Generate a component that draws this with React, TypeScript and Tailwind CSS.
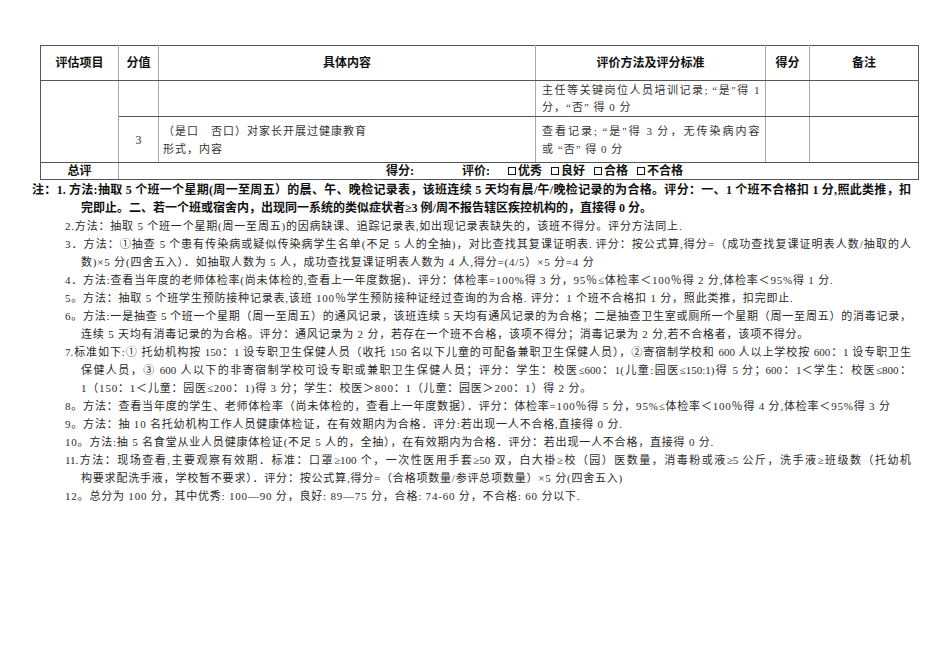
import React from "react";

const base = "p-0 border border-solid border-t-[#555] border-b-[#555] align-middle";
const inner = base + " border-l-[#aaa] border-r-[#aaa]";
const first = base + " border-l-[#555] border-r-[#aaa]";
const last = base + " border-l-[#aaa] border-r-[#555]";
const head = "text-center font-bold text-[12px] text-[#111] leading-[16px]";

type NoteProps = {
  children: React.ReactNode;
  indent: string;
  justify?: boolean;
  bold?: boolean;
};

function Note({ children, indent, justify = false, bold = false }: NoteProps) {
  const weight = bold
    ? "font-bold text-[12px] text-[#111] tracking-normal"
    : "text-[11px] text-[#2a2a2a]";
  const align = justify
    ? "text-justify [text-align-last:justify] tracking-normal"
    : "whitespace-nowrap tracking-[0.8px]";
  return (
    <div className={`h-[18px] leading-[18px] ${indent} ${weight} ${bold ? "" : align} ${bold && justify ? "text-justify [text-align-last:justify]" : ""} ${bold && !justify ? "whitespace-nowrap" : ""}`}>
      {children}
    </div>
  );
}

function Box({ label }: { label: string }) {
  return (
    <span className="flex items-center">
      <span className="inline-block w-[8px] h-[8px] border border-[#111] mr-[2px]"></span>
      <span>{label}</span>
    </span>
  );
}

export default function App() {
  return (
    <div className="w-[950px] h-[672px] bg-white overflow-hidden [font-family:'Liberation_Serif','Noto_Sans_CJK_SC',serif] text-[#333]">
      <div className="pt-[45px] pl-[40px]">
        <table className="border-collapse table-fixed w-[878px]">
          <colgroup>
            <col className="w-[78px]" />
            <col className="w-[40px]" />
            <col className="w-[377px]" />
            <col className="w-[230px]" />
            <col className="w-[44px]" />
            <col className="w-[109px]" />
          </colgroup>
          <tbody>
            <tr className="h-[35px]">
              <td className={first + " " + head}>评估项目</td>
              <td className={inner + " " + head}>分值</td>
              <td className={inner + " " + head}>具体内容</td>
              <td className={inner + " " + head}>评价方法及评分标准</td>
              <td className={inner + " " + head}>得分</td>
              <td className={last + " " + head}>备注</td>
            </tr>
            <tr className="h-[36px]">
              <td className={first} rowSpan={2}></td>
              <td className={inner}></td>
              <td className={inner}></td>
              <td className={inner}>
                <div className="pl-[6px] pr-[5px] text-[11px] leading-[17px] text-[#333]">
                  <div className="text-justify [text-align-last:justify] tracking-[0.5px]">主任等关键岗位人员培训记录;  “是"得 1</div>
                  <div className="tracking-[1px] whitespace-nowrap">分，“否” 得 0 分</div>
                </div>
              </td>
              <td className={inner}></td>
              <td className={last}></td>
            </tr>
            <tr className="h-[46px]">
              <td className={inner + " text-center text-[12px] text-[#333]"}>3</td>
              <td className={inner}>
                <div className="pl-[4px] text-[11px] leading-[18px] text-[#333] tracking-[1px]">
                  <div className="whitespace-nowrap">（是口　否口）对家长开展过健康教育</div>
                  <div className="whitespace-nowrap">形式，内容</div>
                </div>
              </td>
              <td className={inner}>
                <div className="pl-[6px] pr-[5px] text-[11px] leading-[18px] text-[#333]">
                  <div className="text-justify [text-align-last:justify] tracking-[0.5px]">查看记录;  “是"得 3 分，无传染病内容</div>
                  <div className="tracking-[1px] whitespace-nowrap">或 “否” 得 0 分</div>
                </div>
              </td>
              <td className={inner}></td>
              <td className={last}></td>
            </tr>
            <tr className="h-[16px]">
              <td className={first + " " + head}>总评</td>
              <td className={last} colSpan={5}>
                <div className="flex items-center pl-[267px] font-bold text-[12px] leading-[15px] text-[#111]">
                  <span className="mr-[48px]">得分:</span>
                  <span className="mr-[18px]">评价:</span>
                  <span className="flex items-center gap-[9px]">
                    <Box label="优秀" />
                    <Box label="良好" />
                    <Box label="合格" />
                    <Box label="不合格" />
                  </span>
                </div>
              </td>
            </tr>
          </tbody>
        </table>
      </div>
      <div className="ml-[32px] w-[879px] pt-[1px]">
        <Note indent="pl-0" bold justify>注：1. 方法:抽取 5 个班一个星期(周一至周五）的晨、午、晚检记录表，该班连续 5 天均有晨/午/晚检记录的为合格。评分：一、1 个班不合格扣 1 分,照此类推，扣</Note>
        <Note indent="pl-[49px]" bold>完即止。二、若一个班或宿舍内，出现同一系统的类似症状者≥3 例/周不报告辖区疾控机构的，直接得 0 分。</Note>
        <Note indent="pl-[33px]">2.方法：抽取 5 个班一个星期(周一至周五)的因病缺课、追踪记录表,如出现记录表缺失的，该班不得分。评分方法同上.</Note>
        <Note indent="pl-[33px]" justify>3．方法：①抽查 5 个患有传染病或疑似传染病学生名单(不足 5 人的全抽)，对比查找其复课证明表. 评分：按公式算,得分=（成功查找复课证明表人数/抽取的人</Note>
        <Note indent="pl-[49px]">数)×5 分(四舍五入）．如抽取人数为 5 人，成功查找复课证明表人数为 4 人,得分=(4/5）×5 分=4 分</Note>
        <Note indent="pl-[33px]">4．方法:查看当年度的老师体检率(尚未体检的,查看上一年度数据)．评分：体检率=100%得 3 分，95％≤体检率＜100％得 2 分,体检率＜95%得 1 分.</Note>
        <Note indent="pl-[33px]">5。方法：抽取 5 个班学生预防接种记录表,该班 100％学生预防接种证经过查询的为合格. 评分：1 个班不合格扣 1 分，照此类推，扣完即止.</Note>
        <Note indent="pl-[33px]" justify>6。方法:一是抽查 5 个班一个星期（周一至周五）的通风记录，该班连续 5 天均有通风记录的为合格；二是抽查卫生室或厕所一个星期（周一至周五）的消毒记录，</Note>
        <Note indent="pl-[49px]">连续 5 天均有消毒记录的为合格。评分：通风记录为 2 分，若存在一个班不合格，该项不得分；消毒记录为 2 分,若不合格者，该项不得分。</Note>
        <Note indent="pl-[33px]" justify>7.标准如下:① 托幼机构按 150：1 设专职卫生保健人员（收托 150 名以下儿童的可配备兼职卫生保健人员），②寄宿制学校和 600 人以上学校按 600：1 设专职卫生</Note>
        <Note indent="pl-[49px]" justify>保健人员，③ 600 人以下的非寄宿制学校可设专职或兼职卫生保健人员；评分：学生：校医≤600：1(儿童:园医≤150:1)得 5 分；600：1＜学生：校医≤800：</Note>
        <Note indent="pl-[49px]">1（150：1＜儿童：园医≤200：1)得 3 分；学生：校医＞800：1（儿童：园医＞200：1）得 2 分。</Note>
        <Note indent="pl-[33px]">8。方法：查看当年度的学生、老师体检率（尚未体检的，查看上一年度数据）．评分：体检率=100％得 5 分，95%≤体检率＜100％得 4 分,体检率＜95%得 3 分</Note>
        <Note indent="pl-[33px]">9。方法：抽 10 名托幼机构工作人员健康体检证，在有效期内为合格．评分:若出现一人不合格,直接得 0 分.</Note>
        <Note indent="pl-[33px]">10。方法:抽 5 名食堂从业人员健康体检证(不足 5 人的，全抽），在有效期内为合格．评分：若出现一人不合格，直接得 0 分.</Note>
        <Note indent="pl-[33px]" justify>11.方法：现场查看,主要观察有效期．标准：口罩≥100 个，一次性医用手套≥50 双，白大褂≥校（园）医数量，消毒粉或液≥5 公斤，洗手液≥班级数（托幼机</Note>
        <Note indent="pl-[49px]">构要求配洗手液，学校暂不要求）．评分：按公式算,得分=（合格项数量/参评总项数量）×5 分(四舍五入)</Note>
        <Note indent="pl-[33px]">12。总分为 100 分，其中优秀: 100—90 分，良好: 89—75 分，合格: 74-60 分，不合格: 60 分以下.</Note>
      </div>
    </div>
  );
}
